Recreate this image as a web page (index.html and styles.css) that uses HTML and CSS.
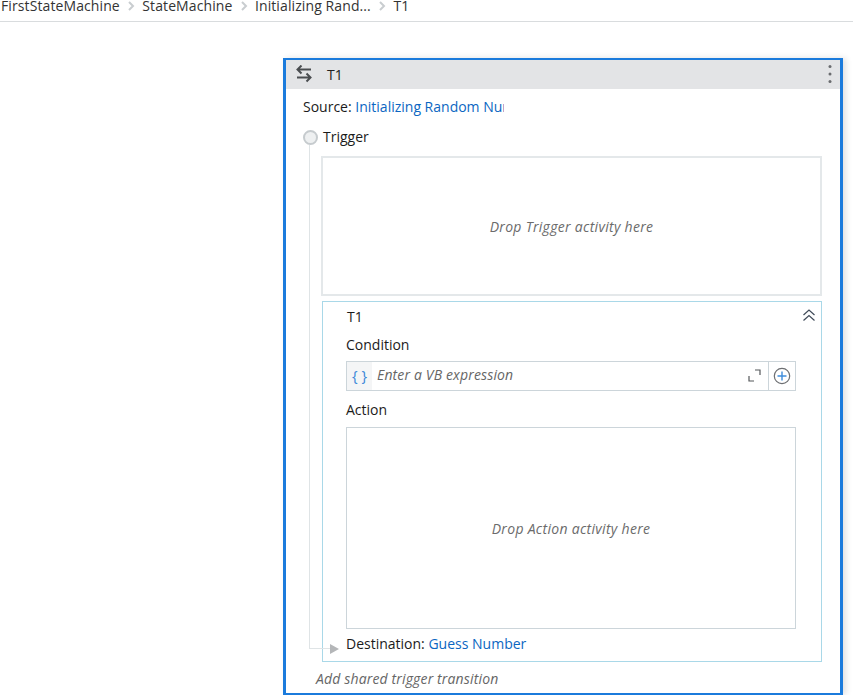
FILE: index.html
```html
<!doctype html>
<html>
 <head>
  <title>T1</title>
  <link rel="stylesheet" href="styles.css">
 </head>
 <body>
  <div class="breadcrumb">
   <span>FirstStateMachine</span>
   <svg class="crumb-sep" width="8" height="10" viewBox="0 0 8 10"><path d="M2 1l4 4-4 4" fill="none" stroke="#c9cdd0" stroke-width="2"/></svg>
   <span>StateMachine</span>
   <svg class="crumb-sep" width="8" height="10" viewBox="0 0 8 10"><path d="M2 1l4 4-4 4" fill="none" stroke="#c9cdd0" stroke-width="2"/></svg>
   <span>Initializing Rand...</span>
   <svg class="crumb-sep" width="8" height="10" viewBox="0 0 8 10"><path d="M2 1l4 4-4 4" fill="none" stroke="#c9cdd0" stroke-width="2"/></svg>
   <span>T1</span>
  </div>

  <div class="card">
   <div class="card-head">
    <svg class="swap-icon" width="18" height="18" viewBox="0 0 18 18"><path d="M6.500 0.500L2.500 4.500l4 4M2.500 4.500H16M11.500 8.500l4 4-4 4M15.500 12.500H2" fill="none" stroke="#4a4d50" stroke-width="2"/></svg>
    <span class="card-title">T1</span>
    <svg class="dots" width="4" height="16" viewBox="0 0 4 16"><circle cx="2" cy="0.500" r="1.500"/><circle cx="2" cy="8" r="1.500"/><circle cx="2" cy="15.500" r="1.500"/></svg>
   </div>

   <div class="card-body">
    <div class="connector"></div>
    <div class="source">Source: <a class="link source-link">Initializing Random Number</a></div>

    <div class="trigger-row">
     <span class="dot"></span>
     <span>Trigger</span>
    </div>

    <div class="drop drop-trigger">Drop Trigger activity here</div>

    <div class="transition">
     <div class="transition-head">
      <span>T1</span>
      <svg class="collapse" width="14" height="14" viewBox="0 0 14 14"><path d="M1.500 7l5.500-5 5.500 5M1.500 12.500l5.500-5 5.500 5" fill="none" stroke="#3f4a58" stroke-width="1.200"/></svg>
     </div>
     <div class="field-label">Condition</div>
     <div class="expr">
      <span class="expr-type">{ }</span>
      <span class="expr-text">Enter a VB expression</span>
      <svg class="expr-expand" width="13" height="13" viewBox="0 0 13 13"><path d="M1 7v5h5M7 1h5v5" fill="none" stroke="#55585b" stroke-width="1.200"/></svg>
      <span class="expr-add">
       <svg width="18" height="18" viewBox="0 0 18 18"><circle cx="9" cy="9" r="7.700" fill="none" stroke="#6d6f72" stroke-width="1.200"/><path d="M4.500 9h9M9 4.500v9" stroke="#3f8ddc" stroke-width="1.400"/></svg>
      </span>
     </div>
     <div class="field-label field-label-action">Action</div>
     <div class="drop drop-action">Drop Action activity here</div>
     <div class="destination">Destination: <a class="link">Guess Number</a></div>
    </div>

    <div class="add-shared">Add shared trigger transition</div>
   </div>
  </div>
 </body>
</html>
```

FILE: styles.css
```css
html, body {
  height: 695px;
  overflow: hidden;
}

body {
  margin: 0;
  background-color: #fff;
  color: #1b1b1b;
  font-family: "Open Sans", "Noto Sans", sans-serif;
  font-size: 14px;
}

.breadcrumb {
  display: flex;
  align-items: flex-end;
  gap: 7.25px;
  height: 13px;
  padding-left: 1px;
  padding-bottom: 8px;
  border-bottom: 1px solid #d9dcde;
  line-height: 15px;
  letter-spacing: 0.1px;
  color: #333;
}

.crumb-sep {
  margin-bottom: 2px;
}

.card {
  box-sizing: border-box;
  width: 560px;
  height: 637px;
  margin: 36px 0 0 283px;
  border: 3px solid #1b7bdc;
  border-top-width: 2px;
  border-bottom-width: 2px;
  box-shadow: 3px 0 6px rgba(0, 0, 0, 0.12);
}

.card-head {
  display: flex;
  align-items: center;
  height: 29px;
  background-color: #e3e4e6;
  padding: 0 8px 0 9px;
}

.card-title {
  margin-left: 14px;
  margin-bottom: 1px;
  flex: 1;
  color: #222;
}

.swap-icon {
  margin-bottom: 1px;
}

.dots {
  fill: #6a6c6f;
  overflow: visible;
  margin-bottom: 2px;
}

.card-body {
  position: relative;
  padding-left: 36px;
  padding-right: 18px;
}

.connector {
  position: absolute;
  left: 23px;
  top: 56px;
  width: 20px;
  height: 503px;
  border-left: 1px solid #dfe4e6;
  border-bottom: 1px solid #dfe4e6;
}

.connector::after {
  content: "";
  position: absolute;
  right: -9px;
  bottom: -6px;
  border-left: 9px solid #b4b6b8;
  border-top: 5px solid transparent;
  border-bottom: 5px solid transparent;
}

.source {
  position: relative;
  height: 34px;
  margin-left: -19px;
  line-height: 36px;
  white-space: nowrap;
}

.link {
  color: #0b66c2;
}

.source-link {
  display: inline-block;
  width: 149px;
  overflow: hidden;
  vertical-align: top;
}

.trigger-row {
  position: relative;
  display: flex;
  align-items: center;
  gap: 5px;
  height: 26px;
  margin-left: -19px;
}

.dot {
  box-sizing: border-box;
  width: 15px;
  height: 15px;
  border: 2px solid #c6cbce;
  border-radius: 50%;
  background-color: #eef0f1;
  margin-top: 3px;
}

.drop {
  display: flex;
  align-items: center;
  justify-content: center;
  box-sizing: border-box;
  font-style: italic;
  color: #6b6b6b;
  letter-spacing: 0.3px;
}

.drop-trigger {
  height: 140px;
  margin-top: 7px;
  margin-left: -1px;
  border: 2px solid #e4e8ea;
  background-color: #fff;
}

.transition {
  box-sizing: border-box;
  height: 361px;
  margin-top: 5px;
  padding: 0 25px 0 23px;
  border: 1px solid #a9d8e8;
}

.transition-head {
  display: flex;
  justify-content: space-between;
  align-items: center;
  height: 28px;
  padding: 0 0 0 1px;
  margin-right: -19px;
}

.collapse {
  margin-bottom: 3px;
  margin-right: -1px;
}

.field-label {
  height: 31px;
  line-height: 30px;
}

.expr {
  display: flex;
  align-items: center;
  box-sizing: border-box;
  height: 30px;
  border: 1px solid #ccd5da;
}

.expr-type {
  width: 25px;
  height: 100%;
  text-align: center;
  background-color: #f4f5f6;
  color: #3a87d8;
  line-height: 27px;
  font-size: 15px;
}

.expr-text {
  flex: 1;
  margin-left: 5px;
  margin-bottom: 4px;
  font-style: italic;
  color: #666;
  letter-spacing: 0.15px;
}

.expr-expand {
  margin-right: 7px;
  margin-bottom: 2px;
}

.expr-add {
  display: flex;
  align-items: center;
  justify-content: center;
  width: 26px;
  height: 100%;
  border-left: 1px solid #ccd5da;
}

.field-label-action {
  height: 36px;
  line-height: 38px;
}

.drop-action {
  height: 202px;
  border: 1px solid #ccd5da;
}

.destination {
  height: 30px;
  line-height: 30px;
  white-space: nowrap;
}

.add-shared {
  margin-left: -6px;
  height: 33px;
  line-height: 33px;
  font-style: italic;
  color: #666;
  letter-spacing: 0.15px;
}
```
